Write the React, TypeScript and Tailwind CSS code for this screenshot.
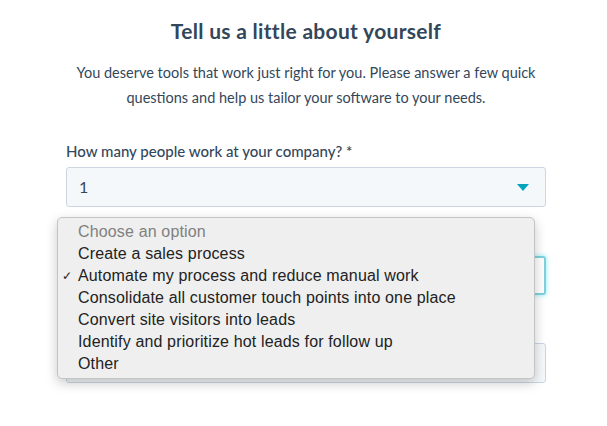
import React from "react";

const options = [
  "Choose an option",
  "Create a sales process",
  "Automate my process and reduce manual work",
  "Consolidate all customer touch points into one place",
  "Convert site visitors into leads",
  "Identify and prioritize hot leads for follow up",
  "Other",
];

function Caret() {
  return (
    <svg width="12" height="7" viewBox="0 0 12 7" className="shrink-0">
      <path d="M0 0 L12 0 L6 7 Z" fill="#00a4bd" />
    </svg>
  );
}

export default function App() {
  return (
    <div className="min-h-[426px] w-full bg-white flex justify-center pl-[5px] font-['Lato',sans-serif] text-[#33475b]">
      <div className="w-[480px] flex flex-col items-stretch pt-[16px]">
        <h1 className="text-center text-[21px] leading-[30px] font-bold tracking-[0.3px]">
          Tell us a little about yourself
        </h1>
        <p className="mt-[14px] text-center text-[14.5px] leading-[25px] px-[6px]">
          You deserve tools that work just right for you. Please answer a few quick questions and help us tailor your software to your needs.
        </p>
        <div className="relative mt-[31px]">
          <div className="flex flex-col">
            <label className="text-[15px] leading-[20px] font-medium">
              How many people work at your company? *
            </label>
            <div className="mt-[6px] h-[40px] rounded-[3px] border border-[#cbd6e2] bg-[#f5f8fa] flex items-center justify-between pl-[12px] pr-[16px] text-[16px]">
              <span>1</span>
              <Caret />
            </div>
          </div>
          <div className="flex flex-col mt-[23px]">
            <label className="invisible text-[15px] leading-[20px] font-medium">
              What is your main goal? *
            </label>
            <div className="mt-[6px] h-[39px] rounded-[3px] border-2 border-[#7fd1de] bg-white shadow-[0_0_4px_1px_rgba(0,208,228,0.3)]"></div>
          </div>
          <div className="flex flex-col mt-[23px]">
            <label className="invisible text-[15px] leading-[20px] font-medium">
              What is your role? *
            </label>
            <div className="mt-[5px] h-[40px] rounded-[3px] border border-[#cbd6e2] bg-[#f5f8fa]"></div>
          </div>

          <div className="absolute left-[-9px] top-[76px] w-[478px] rounded-[5px] border border-[#c4c4c4] bg-[#efefef] py-[3px] shadow-[0_4px_12px_rgba(0,0,0,0.22)] font-['Liberation_Sans',Arial,sans-serif] text-[16px] tracking-[0.15px] leading-[22px] text-[#222]">
            {options.map((o, i) => (
              <div key={o} className="relative pl-[20px]">
                {i === 2 && (
                  <span className="absolute left-[4px] top-0 text-[12px]">✓</span>
                )}
                <span className={i === 0 ? "text-[#808080]" : ""}>{o}</span>
              </div>
            ))}
          </div>
        </div>
      </div>
    </div>
  );
}
